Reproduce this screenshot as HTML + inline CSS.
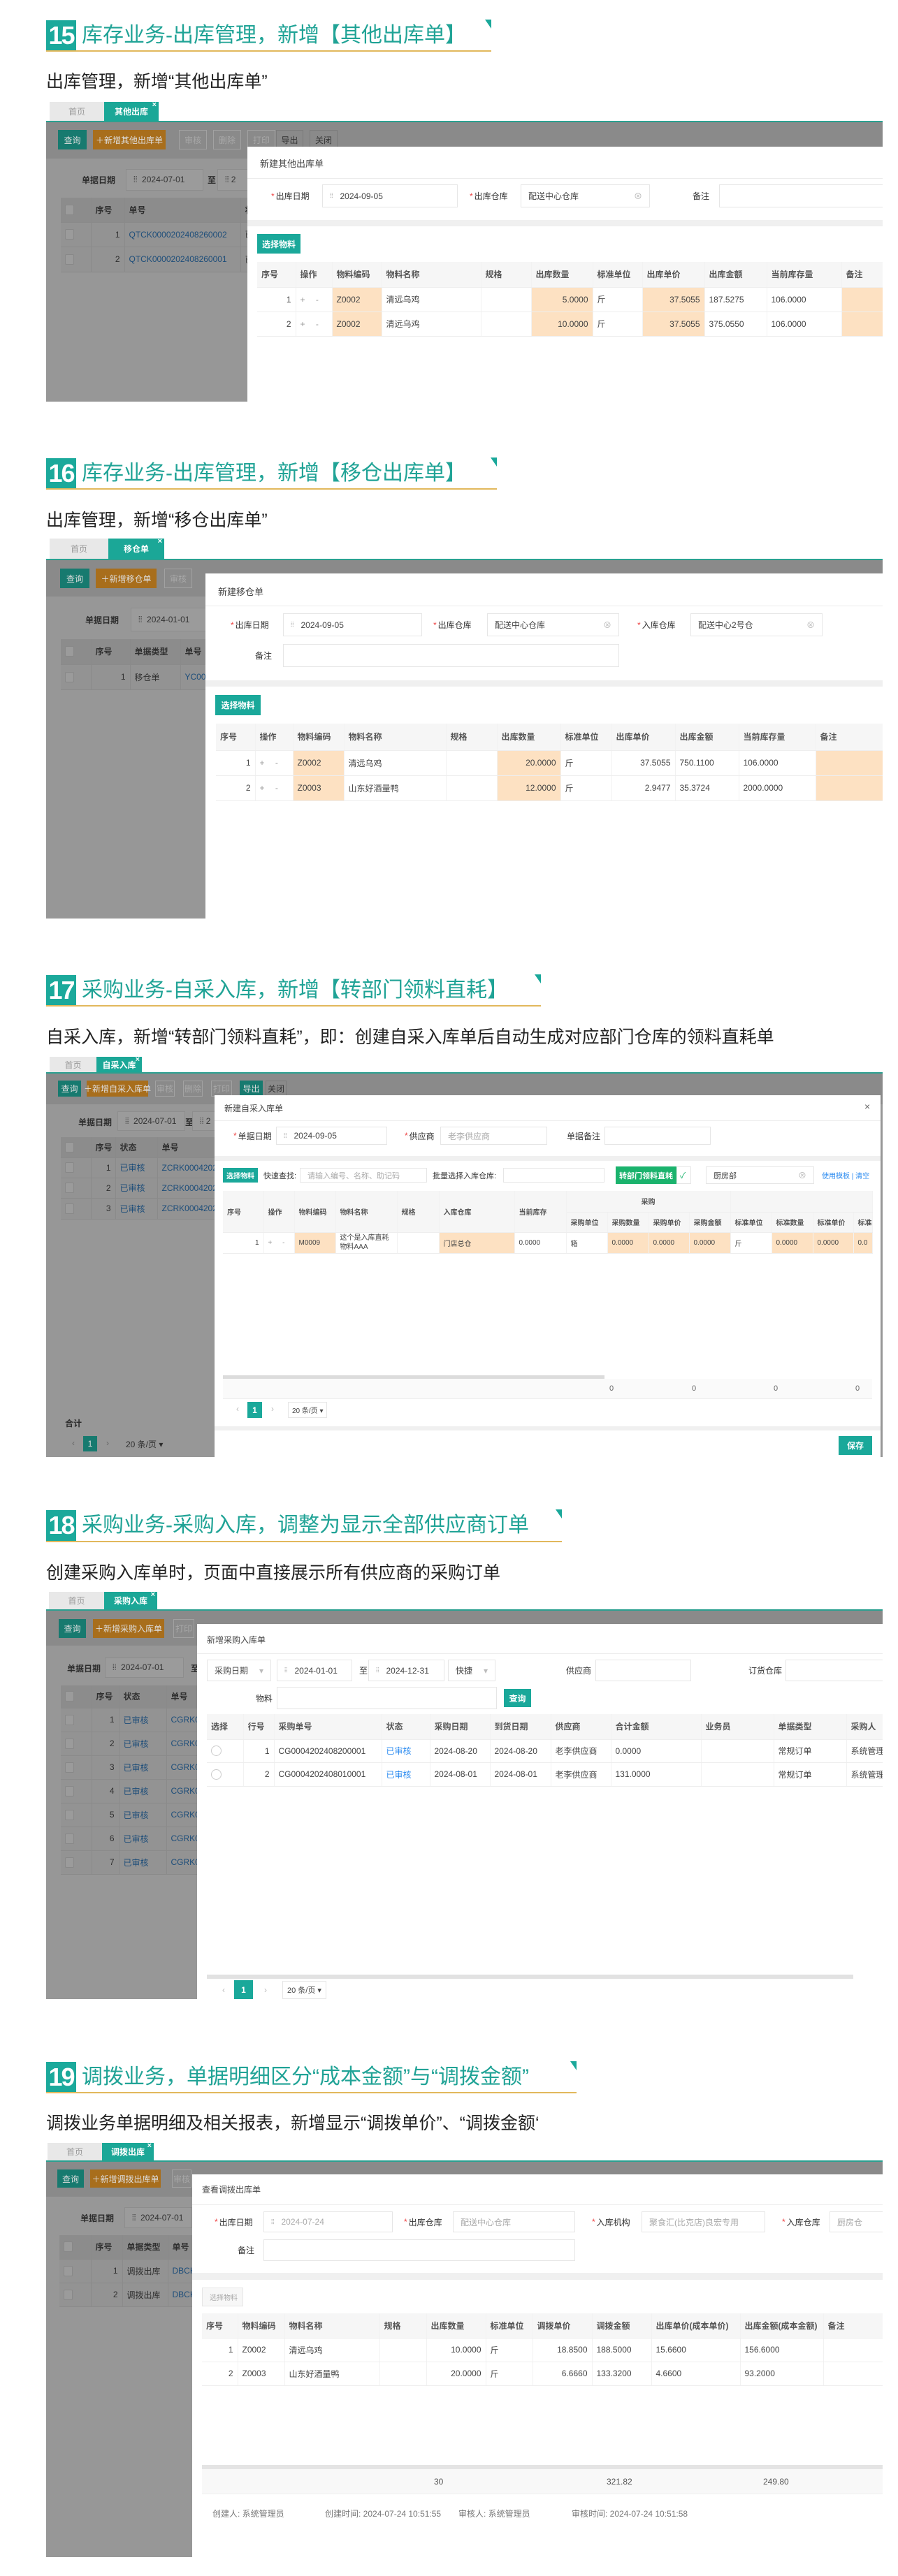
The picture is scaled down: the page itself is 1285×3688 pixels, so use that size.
<!DOCTYPE html>
<html><head><meta charset="utf-8">
<style>
*{margin:0;padding:0;box-sizing:border-box}
body{width:1285px;height:3688px;background:#fff;position:relative;overflow:hidden;font-family:"Liberation Sans","Noto Sans CJK SC",sans-serif;color:#333}
.a{position:absolute}
.hb{position:absolute;left:66px;width:43px;height:44px;background:#1ba99b;color:#fff;font:bold 36px/44px "Liberation Sans",sans-serif;text-align:center;letter-spacing:-2px}
.ht{position:absolute;left:117px;font-size:30px;line-height:44px;color:#20a396;white-space:nowrap;font-family:"Liberation Sans","Noto Sans CJK SC",sans-serif}
.hu{position:absolute;left:66px;height:2px;background:#e2b85c}
.tri{position:absolute;width:0;height:0;border-top:13px solid #1aa89a;border-left:9px solid transparent}
.sub{position:absolute;left:66px;font-size:25px;line-height:30px;color:#222;white-space:nowrap}
.shot{position:absolute;left:66px;width:1197px;background:#979797;overflow:hidden}
.tabbar{position:absolute;left:0;top:0;width:100%;background:#fff}
.tab{position:absolute;top:0;bottom:0;background:#e8e8e8;color:#9a9a9a;font-size:12px;display:flex;align-items:center;justify-content:center}
.tab.on{background:#1ba797;color:#fff;font-weight:bold}
.tab.on:after{content:"×";position:absolute;right:3px;top:-2px;font-size:11px}
.tl{position:absolute;left:0;width:100%;height:2px;background:#2aa090}
.band{position:absolute;left:0;width:100%;background:#8a8a8a}
.b{position:absolute;font-size:12px;display:flex;align-items:center;justify-content:center;color:#ddd;white-space:nowrap}
.bt{background:#177a6f}
.bo{background:#a86e1c}
.bd{border:1px solid #a2a2a2;color:#a8a8a8}
.bk{border:1px solid #7a7a7a;color:#333}
.g{position:absolute;font-size:12px;color:#2d2d2d;white-space:nowrap}
.gi{position:absolute;background:#9b9b9b;border:1px solid #8d8d8d;font-size:12px;color:#333;display:flex;align-items:center;padding-left:10px;white-space:nowrap}
.lt{position:absolute;border-collapse:collapse;table-layout:fixed;font-size:12px;color:#2f2f2f;background:#939393}
.lt td{border-bottom:1px solid #8a8a8a;border-right:1px solid #8a8a8a;padding:0 6px;white-space:nowrap;overflow:hidden}
.lt tr.h td{background:#8c8c8c;font-weight:bold}
.lk{color:#1e4e7a}
.cb{display:inline-block;width:13px;height:15px;border:1px solid #888;background:#9b9b9b;border-radius:2px;vertical-align:middle}
.m{position:absolute;background:#fff;overflow:hidden}
.mt{position:absolute;font-size:13px;color:#444;white-space:nowrap}
.dv{position:absolute;left:0;width:100%;height:1px;background:#ececec}
.gb{position:absolute;left:0;width:100%;background:#f0f0f0}
.lb{position:absolute;font-size:12px;color:#333;white-space:nowrap;display:flex;align-items:center}
.lb i{color:#e44;font-style:normal;margin-right:2px}
.in{position:absolute;background:#fff;border:1px solid #e6e6e6;font-size:12px;color:#444;display:flex;align-items:center;padding-left:10px;white-space:nowrap}
.in.ph{color:#aaa}
.cal{color:#aaa;margin-right:10px;font-size:10px}
.x{position:absolute;right:10px;color:#bbb;font-size:12px}
.bn{position:absolute;background:#1aa89a;color:#fff;font-size:12px;display:flex;align-items:center;justify-content:center;font-weight:bold;white-space:nowrap}
.t{position:absolute;border-collapse:collapse;table-layout:fixed;font-size:12px;color:#444}
.t td,.t th{border-bottom:1px solid #eee;border-right:1px solid #f2f2f2;padding:0 6px;white-space:nowrap;overflow:hidden;text-align:left}
.t th{background:#f6f6f6;color:#555;font-weight:bold}
.t .o{background:#fde1c2}
.r{text-align:right!important}
.pm{color:#999;letter-spacing:6px}
.blue{color:#2d8cf0}
</style></head><body>

<!-- ============ 15 ============ -->
<div class="hb" style="top:29px">15</div>
<div class="ht" style="top:29px">库存业务-出库管理，新增【其他出库单】</div>
<div class="hu" style="top:72px;width:637px"></div>
<div class="tri" style="left:694px;top:28px"></div>
<div class="sub" style="top:102px">出库管理，新增“其他出库单”</div>

<div class="shot" style="top:146px;height:429px">
  <div class="tabbar" style="height:27px">
    <div class="tab" style="left:5px;width:78px">首页</div>
    <div class="tab on" style="left:83px;width:78px">其他出库</div>
  </div>
  <div class="tl" style="top:27px"></div>
  <div class="band" style="top:29px;height:52px"></div>
  <div class="b bt" style="left:17px;top:40px;width:41px;height:28px">查询</div>
  <div class="b bo" style="left:67px;top:40px;width:104px;height:28px">＋新增其他出库单</div>
  <div class="b bd" style="left:190px;top:40px;width:40px;height:28px">审核</div>
  <div class="b bd" style="left:239px;top:40px;width:40px;height:28px">删除</div>
  <div class="b bd" style="left:288px;top:40px;width:40px;height:28px">打印</div>
  <div class="b bk" style="left:329px;top:40px;width:39px;height:28px">导出</div>
  <div class="b bk" style="left:377px;top:40px;width:40px;height:28px">关闭</div>
  <div class="g" style="left:51px;top:103px;font-weight:bold">单据日期</div>
  <div class="gi" style="left:114px;top:96px;width:111px;height:31px">⦙⦙ &nbsp;2024-07-01</div>
  <div class="g" style="left:231px;top:103px;font-weight:bold">至</div>
  <div class="gi" style="left:245px;top:96px;width:60px;height:31px">⦙⦙ 2</div>
  <table class="lt" style="left:21px;top:137px;width:267px">
    <colgroup><col style="width:43px"><col style="width:48px"><col style="width:166px"><col style="width:10px"></colgroup>
    <tr class="h" style="height:35px"><td><span class="cb"></span></td><td>序号</td><td>单号</td><td>状</td></tr>
    <tr style="height:35px"><td><span class="cb"></span></td><td class="r">1</td><td class="lk">QTCK0000202408260002</td><td>已</td></tr>
    <tr style="height:36px"><td><span class="cb"></span></td><td class="r">2</td><td class="lk">QTCK0000202408260001</td><td>已</td></tr>
  </table>
  <div class="m" style="left:288px;top:64px;width:909px;height:365px">
    <div class="mt" style="left:18px;top:14px">新建其他出库单</div>
    <div class="dv" style="top:45px"></div>
    <div class="lb" style="left:34px;top:54px;height:33px"><i>*</i>出库日期</div>
    <div class="in" style="left:107px;top:54px;width:194px;height:33px"><span class="cal">⦙⦙</span>2024-09-05</div>
    <div class="lb" style="left:318px;top:54px;height:33px"><i>*</i>出库仓库</div>
    <div class="in" style="left:391px;top:54px;width:185px;height:33px">配送中心仓库<span class="x">⊗</span></div>
    <div class="lb" style="left:637px;top:54px;height:33px">备注</div>
    <div class="in" style="left:675px;top:54px;width:240px;height:33px"></div>
    <div class="gb" style="top:105px;height:9px"></div>
    <div class="bn" style="left:14px;top:125px;width:62px;height:28px">选择物料</div>
    <table class="t" style="left:14px;top:165px;width:895px">
      <colgroup><col style="width:55px"><col style="width:52px"><col style="width:71px"><col style="width:142px"><col style="width:72px"><col style="width:88px"><col style="width:71px"><col style="width:89px"><col style="width:89px"><col style="width:107px"><col style="width:59px"></colgroup>
      <tr style="height:36px"><th>序号</th><th>操作</th><th>物料编码</th><th>物料名称</th><th>规格</th><th>出库数量</th><th>标准单位</th><th>出库单价</th><th>出库金额</th><th>当前库存量</th><th>备注</th></tr>
      <tr style="height:35px"><td class="r">1</td><td class="pm">+ -</td><td class="o">Z0002</td><td>清远乌鸡</td><td></td><td class="o r">5.0000</td><td>斤</td><td class="o r">37.5055</td><td>187.5275</td><td>106.0000</td><td class="o"></td></tr>
      <tr style="height:35px"><td class="r">2</td><td class="pm">+ -</td><td class="o">Z0002</td><td>清远乌鸡</td><td></td><td class="o r">10.0000</td><td>斤</td><td class="o r">37.5055</td><td>375.0550</td><td>106.0000</td><td class="o"></td></tr>
    </table>
  </div>
</div>

<!-- ============ 16 ============ -->
<div class="hb" style="top:656px">16</div>
<div class="ht" style="top:656px">库存业务-出库管理，新增【移仓出库单】</div>
<div class="hu" style="top:699px;width:645px"></div>
<div class="tri" style="left:702px;top:655px"></div>
<div class="sub" style="top:730px">出库管理，新增“移仓出库单”</div>

<div class="shot" style="top:771px;height:544px">
  <div class="tabbar" style="height:29px">
    <div class="tab" style="left:5px;width:84px">首页</div>
    <div class="tab on" style="left:89px;width:80px">移仓单</div>
  </div>
  <div class="tl" style="top:29px"></div>
  <div class="band" style="top:31px;height:52px"></div>
  <div class="b bt" style="left:20px;top:43px;width:42px;height:28px">查询</div>
  <div class="b bo" style="left:71px;top:43px;width:87px;height:28px">＋新增移仓单</div>
  <div class="b bd" style="left:169px;top:43px;width:40px;height:28px">审核</div>
  <div class="g" style="left:56px;top:108px;font-weight:bold">单据日期</div>
  <div class="gi" style="left:121px;top:99px;width:120px;height:34px">⦙⦙ &nbsp;2024-01-01</div>
  <table class="lt" style="left:21px;top:144px;width:207px">
    <colgroup><col style="width:43px"><col style="width:56px"><col style="width:72px"><col style="width:36px"></colgroup>
    <tr class="h" style="height:36px"><td><span class="cb"></span></td><td>序号</td><td>单据类型</td><td>单号</td></tr>
    <tr style="height:36px"><td><span class="cb"></span></td><td class="r">1</td><td>移仓单</td><td class="lk">YC00</td></tr>
  </table>
  <div class="m" style="left:228px;top:50px;width:969px;height:494px">
    <div class="mt" style="left:18px;top:16px">新建移仓单</div>
    <div class="dv" style="top:46px"></div>
    <div class="lb" style="left:36px;top:57px;height:33px"><i>*</i>出库日期</div>
    <div class="in" style="left:111px;top:57px;width:199px;height:33px"><span class="cal">⦙⦙</span>2024-09-05</div>
    <div class="lb" style="left:326px;top:57px;height:33px"><i>*</i>出库仓库</div>
    <div class="in" style="left:403px;top:57px;width:189px;height:33px">配送中心仓库<span class="x">⊗</span></div>
    <div class="lb" style="left:618px;top:57px;height:33px"><i>*</i>入库仓库</div>
    <div class="in" style="left:694px;top:57px;width:189px;height:33px">配送中心2号仓<span class="x">⊗</span></div>
    <div class="lb" style="left:71px;top:101px;height:33px">备注</div>
    <div class="in" style="left:111px;top:101px;width:481px;height:33px"></div>
    <div class="gb" style="top:153px;height:9px"></div>
    <div class="bn" style="left:14px;top:174px;width:65px;height:29px">选择物料</div>
    <table class="t" style="left:15px;top:215px;width:954px">
      <colgroup><col style="width:56px"><col style="width:54px"><col style="width:73px"><col style="width:146px"><col style="width:73px"><col style="width:91px"><col style="width:73px"><col style="width:91px"><col style="width:91px"><col style="width:110px"><col style="width:96px"></colgroup>
      <tr style="height:38px"><th>序号</th><th>操作</th><th>物料编码</th><th>物料名称</th><th>规格</th><th>出库数量</th><th>标准单位</th><th>出库单价</th><th>出库金额</th><th>当前库存量</th><th>备注</th></tr>
      <tr style="height:36px"><td class="r">1</td><td class="pm">+ -</td><td class="o">Z0002</td><td>清远乌鸡</td><td></td><td class="o r">20.0000</td><td>斤</td><td class="r">37.5055</td><td>750.1100</td><td>106.0000</td><td class="o"></td></tr>
      <tr style="height:36px"><td class="r">2</td><td class="pm">+ -</td><td class="o">Z0003</td><td>山东好酒量鸭</td><td></td><td class="o r">12.0000</td><td>斤</td><td class="r">2.9477</td><td>35.3724</td><td>2000.0000</td><td class="o"></td></tr>
    </table>
  </div>
</div>

<!-- ============ 17 ============ -->
<div class="hb" style="top:1396px">17</div>
<div class="ht" style="top:1396px">采购业务-自采入库，新增【转部门领料直耗】</div>
<div class="hu" style="top:1439px;width:708px"></div>
<div class="tri" style="left:765px;top:1395px"></div>
<div class="sub" style="top:1470px">自采入库，新增“转部门领料直耗”，即：创建自采入库单后自动生成对应部门仓库的领料直耗单</div>

<div class="shot" style="top:1513px;height:573px">
  <div class="tabbar" style="height:22px">
    <div class="tab" style="left:5px;width:67px">首页</div>
    <div class="tab on" style="left:72px;width:65px">自采入库</div>
  </div>
  <div class="tl" style="top:22px"></div>
  <div class="band" style="top:24px;height:44px"></div>
  <div class="b bt" style="left:17px;top:34px;width:33px;height:23px">查询</div>
  <div class="b bo" style="left:58px;top:34px;width:88px;height:23px">＋新增自采入库单</div>
  <div class="b bd" style="left:156px;top:34px;width:28px;height:23px">审核</div>
  <div class="b bd" style="left:196px;top:34px;width:28px;height:23px">删除</div>
  <div class="b bd" style="left:236px;top:34px;width:30px;height:23px">打印</div>
  <div class="b bt" style="left:277px;top:34px;width:33px;height:23px">导出</div>
  <div class="b bk" style="left:314px;top:34px;width:30px;height:23px">关闭</div>
  <div class="g" style="left:46px;top:85px;font-weight:bold">单据日期</div>
  <div class="gi" style="left:102px;top:78px;width:97px;height:28px">⦙⦙ &nbsp;2024-07-01</div>
  <div class="g" style="left:199px;top:85px;font-weight:bold">至</div>
  <div class="gi" style="left:209px;top:78px;width:40px;height:28px">⦙⦙ 2</div>
  <table class="lt" style="left:21px;top:115px;width:220px">
    <colgroup><col style="width:43px"><col style="width:35px"><col style="width:60px"><col style="width:82px"></colgroup>
    <tr class="h" style="height:29px"><td><span class="cb"></span></td><td>序号</td><td>状态</td><td>单号</td></tr>
    <tr style="height:29px"><td><span class="cb"></span></td><td class="r">1</td><td class="lk">已审核</td><td class="lk">ZCRK00042024</td></tr>
    <tr style="height:29px"><td><span class="cb"></span></td><td class="r">2</td><td class="lk">已审核</td><td class="lk">ZCRK00042024</td></tr>
    <tr style="height:30px"><td><span class="cb"></span></td><td class="r">3</td><td class="lk">已审核</td><td class="lk">ZCRK00042024</td></tr>
  </table>
  <div class="g" style="left:27px;top:516px;font-weight:bold">合计</div>
  <div class="g" style="left:37px;top:546px;color:#666">‹</div>
  <div class="b bt" style="left:53px;top:543px;width:20px;height:22px">1</div>
  <div class="g" style="left:86px;top:546px;color:#666">›</div>
  <div class="g" style="left:114px;top:546px">20 条/页 ▾</div>
  <div class="m" style="left:241px;top:55px;width:953px;height:518px">
    <div class="mt" style="left:14px;top:10px;font-size:12px">新建自采入库单</div>
    <div class="mt" style="left:930px;top:8px;font-size:14px;color:#666">×</div>
    <div class="dv" style="top:36px"></div>
    <div class="lb" style="left:27px;top:45px;height:26px"><i>*</i>单据日期</div>
    <div class="in" style="left:88px;top:45px;width:159px;height:26px"><span class="cal">⦙⦙</span>2024-09-05</div>
    <div class="lb" style="left:272px;top:45px;height:26px"><i>*</i>供应商</div>
    <div class="in ph" style="left:323px;top:45px;width:153px;height:26px">老李供应商</div>
    <div class="lb" style="left:504px;top:45px;height:26px">单据备注</div>
    <div class="in" style="left:558px;top:45px;width:152px;height:26px"></div>
    <div class="gb" style="top:87px;height:7px"></div>
    <div class="bn" style="left:12px;top:104px;width:50px;height:21px;font-size:10px">选择物料</div>
    <div class="lb" style="left:70px;top:104px;height:21px;font-size:11px">快速查找:</div>
    <div class="in ph" style="left:122px;top:104px;width:182px;height:21px;font-size:11px">请输入编号、名称、助记码</div>
    <div class="lb" style="left:312px;top:104px;height:21px;font-size:11px">批量选择入库仓库:</div>
    <div class="in" style="left:413px;top:104px;width:145px;height:21px"></div>
    <div class="bn" style="left:574px;top:102px;width:87px;height:25px;background:#1bb36d;font-size:11px">转部门领料直耗</div>
    <div class="in" style="left:661px;top:102px;width:21px;height:25px;padding-left:4px;color:#1bb36d">✓</div>
    <div class="in" style="left:703px;top:102px;width:155px;height:25px;font-size:11px">厨房部<span class="x">⊗</span></div>
    <div class="lb blue" style="left:869px;top:104px;height:21px;font-size:10px">使用模板 | 清空</div>
    <table class="t" style="left:12px;top:137px;width:929px;font-size:10px">
      <colgroup><col style="width:58px"><col style="width:44px"><col style="width:59px"><col style="width:88px"><col style="width:60px"><col style="width:108px"><col style="width:74px"><col style="width:59px"><col style="width:59px"><col style="width:58px"><col style="width:59px"><col style="width:59px"><col style="width:59px"><col style="width:58px"><col style="width:27px"></colgroup>
      <tr style="height:30px"><th rowspan="2">序号</th><th rowspan="2">操作</th><th rowspan="2">物料编码</th><th rowspan="2">物料名称</th><th rowspan="2">规格</th><th rowspan="2">入库仓库</th><th rowspan="2">当前库存</th><th colspan="4" style="text-align:center">采购</th><th colspan="4"></th></tr>
      <tr style="height:29px"><th>采购单位</th><th>采购数量</th><th>采购单价</th><th>采购金额</th><th>标准单位</th><th>标准数量</th><th>标准单价</th><th>标准</th></tr>
      <tr style="height:30px"><td class="r">1</td><td class="pm">+ -</td><td class="o">M0009</td><td style="white-space:normal;line-height:13px">这个是入库直耗物料AAA</td><td></td><td class="o">门店总仓</td><td>0.0000</td><td>箱</td><td class="o">0.0000</td><td class="o">0.0000</td><td class="o">0.0000</td><td>斤</td><td class="o">0.0000</td><td class="o">0.0000</td><td class="o">0.0</td></tr>
    </table>
    <div class="a" style="left:12px;top:401px;width:546px;height:5px;background:#dcdcdc"></div>
    <div class="a" style="left:12px;top:406px;width:929px;height:29px;background:#fafafa;border-bottom:1px solid #eee"></div>
    <div class="g" style="left:565px;top:414px;color:#666;font-size:11px">0</div>
    <div class="g" style="left:683px;top:414px;color:#666;font-size:11px">0</div>
    <div class="g" style="left:800px;top:414px;color:#666;font-size:11px">0</div>
    <div class="g" style="left:917px;top:414px;color:#666;font-size:11px">0</div>
    <div class="g" style="left:31px;top:442px;color:#bbb">‹</div>
    <div class="bn" style="left:47px;top:439px;width:21px;height:23px">1</div>
    <div class="g" style="left:81px;top:442px;color:#bbb">›</div>
    <div class="in" style="left:105px;top:439px;width:56px;height:23px;font-size:10px;padding-left:5px">20 条/页 ▾</div>
    <div class="gb" style="top:474px;height:6px"></div>
    <div class="bn" style="left:893px;top:488px;width:48px;height:27px">保存</div>
  </div>
</div>

<!-- ============ 18 ============ -->
<div class="hb" style="top:2162px">18</div>
<div class="ht" style="top:2162px">采购业务-采购入库，调整为显示全部供应商订单</div>
<div class="hu" style="top:2206px;width:738px"></div>
<div class="tri" style="left:795px;top:2161px"></div>
<div class="sub" style="top:2237px">创建采购入库单时，页面中直接展示所有供应商的采购订单</div>

<div class="shot" style="top:2279px;height:583px">
  <div class="tabbar" style="height:25px">
    <div class="tab" style="left:4px;width:79px">首页</div>
    <div class="tab on" style="left:83px;width:76px">采购入库</div>
  </div>
  <div class="tl" style="top:25px"></div>
  <div class="band" style="top:27px;height:50px"></div>
  <div class="b bt" style="left:18px;top:39px;width:39px;height:27px">查询</div>
  <div class="b bo" style="left:67px;top:39px;width:102px;height:27px">＋新增采购入库单</div>
  <div class="b bd" style="left:182px;top:39px;width:30px;height:27px">打印</div>
  <div class="g" style="left:30px;top:101px;font-weight:bold">单据日期</div>
  <div class="gi" style="left:84px;top:94px;width:113px;height:29px">⦙⦙ &nbsp;2024-07-01</div>
  <div class="g" style="left:207px;top:101px;font-weight:bold">至</div>
  <table class="lt" style="left:21px;top:134px;width:195px">
    <colgroup><col style="width:44px"><col style="width:39px"><col style="width:68px"><col style="width:44px"></colgroup>
    <tr class="h" style="height:32px"><td><span class="cb"></span></td><td>序号</td><td>状态</td><td>单号</td></tr>
    <tr style="height:34px"><td><span class="cb"></span></td><td class="r">1</td><td class="lk">已审核</td><td class="lk">CGRK0</td></tr>
    <tr style="height:34px"><td><span class="cb"></span></td><td class="r">2</td><td class="lk">已审核</td><td class="lk">CGRK0</td></tr>
    <tr style="height:34px"><td><span class="cb"></span></td><td class="r">3</td><td class="lk">已审核</td><td class="lk">CGRK0</td></tr>
    <tr style="height:34px"><td><span class="cb"></span></td><td class="r">4</td><td class="lk">已审核</td><td class="lk">CGRK0</td></tr>
    <tr style="height:34px"><td><span class="cb"></span></td><td class="r">5</td><td class="lk">已审核</td><td class="lk">CGRK0</td></tr>
    <tr style="height:34px"><td><span class="cb"></span></td><td class="r">6</td><td class="lk">已审核</td><td class="lk">CGRK0</td></tr>
    <tr style="height:34px"><td><span class="cb"></span></td><td class="r">7</td><td class="lk">已审核</td><td class="lk">CGRK0</td></tr>
  </table>
  <div class="m" style="left:216px;top:46px;width:981px;height:537px">
    <div class="mt" style="left:14px;top:14px;font-size:12px">新增采购入库单</div>
    <div class="dv" style="top:42px"></div>
    <div class="in" style="left:14px;top:51px;width:92px;height:31px">采购日期<span class="x">▾</span></div>
    <div class="in" style="left:114px;top:51px;width:108px;height:31px"><span class="cal">⦙⦙</span>2024-01-01</div>
    <div class="lb" style="left:232px;top:51px;height:31px">至</div>
    <div class="in" style="left:245px;top:51px;width:109px;height:31px"><span class="cal">⦙⦙</span>2024-12-31</div>
    <div class="in" style="left:359px;top:51px;width:68px;height:31px">快捷<span class="x">▾</span></div>
    <div class="lb" style="left:528px;top:51px;height:31px">供应商</div>
    <div class="in" style="left:570px;top:51px;width:137px;height:31px"></div>
    <div class="lb" style="left:789px;top:51px;height:31px">订货仓库</div>
    <div class="in" style="left:842px;top:51px;width:150px;height:31px"></div>
    <div class="lb" style="left:84px;top:90px;height:32px">物料</div>
    <div class="in" style="left:114px;top:90px;width:315px;height:32px"></div>
    <div class="bn" style="left:439px;top:93px;width:39px;height:26px">查询</div>
    <table class="t" style="left:14px;top:129px;width:967px">
      <colgroup><col style="width:52px"><col style="width:44px"><col style="width:154px"><col style="width:69px"><col style="width:86px"><col style="width:87px"><col style="width:86px"><col style="width:129px"><col style="width:104px"><col style="width:104px"><col style="width:52px"></colgroup>
      <tr style="height:36px"><th>选择</th><th>行号</th><th>采购单号</th><th>状态</th><th>采购日期</th><th>到货日期</th><th>供应商</th><th>合计金额</th><th>业务员</th><th>单据类型</th><th>采购人</th></tr>
      <tr style="height:33px"><td><span style="display:inline-block;width:15px;height:15px;border:1px solid #ccc;border-radius:50%;vertical-align:middle"></span></td><td class="r">1</td><td>CG0004202408200001</td><td class="blue">已审核</td><td>2024-08-20</td><td>2024-08-20</td><td>老李供应商</td><td>0.0000</td><td></td><td>常规订单</td><td>系统管理</td></tr>
      <tr style="height:34px"><td><span style="display:inline-block;width:15px;height:15px;border:1px solid #ccc;border-radius:50%;vertical-align:middle"></span></td><td class="r">2</td><td>CG0004202408010001</td><td class="blue">已审核</td><td>2024-08-01</td><td>2024-08-01</td><td>老李供应商</td><td>131.0000</td><td></td><td>常规订单</td><td>系统管理</td></tr>
    </table>
    <div class="a" style="left:14px;top:502px;width:925px;height:6px;background:#e2e2e2"></div>
    <div class="g" style="left:36px;top:517px;color:#bbb">‹</div>
    <div class="bn" style="left:53px;top:510px;width:27px;height:28px">1</div>
    <div class="g" style="left:96px;top:517px;color:#bbb">›</div>
    <div class="in" style="left:122px;top:511px;width:63px;height:26px;font-size:11px;padding-left:6px">20 条/页 ▾</div>
  </div>
</div>

<!-- ============ 19 ============ -->
<div class="hb" style="top:2952px">19</div>
<div class="ht" style="top:2952px">调拨业务，单据明细区分“成本金额”与“调拨金额”</div>
<div class="hu" style="top:2995px;width:759px"></div>
<div class="tri" style="left:816px;top:2951px"></div>
<div class="sub" style="top:3025px">调拨业务单据明细及相关报表，新增显示“调拨单价”、“调拨金额‘</div>

<div class="shot" style="top:3068px;height:593px">
  <div class="tabbar" style="height:25px">
    <div class="tab" style="left:2px;width:78px">首页</div>
    <div class="tab on" style="left:80px;width:74px">调拨出库</div>
  </div>
  <div class="tl" style="top:25px"></div>
  <div class="band" style="top:27px;height:50px"></div>
  <div class="b bt" style="left:16px;top:38px;width:38px;height:26px">查询</div>
  <div class="b bo" style="left:63px;top:38px;width:101px;height:26px">＋新增调拨出库单</div>
  <div class="b bd" style="left:180px;top:38px;width:28px;height:26px">审核</div>
  <div class="g" style="left:49px;top:99px;font-weight:bold">单据日期</div>
  <div class="gi" style="left:112px;top:92px;width:97px;height:30px">⦙⦙ &nbsp;2024-07-01</div>
  <table class="lt" style="left:19px;top:132px;width:190px">
    <colgroup><col style="width:45px"><col style="width:45px"><col style="width:65px"><col style="width:35px"></colgroup>
    <tr class="h" style="height:34px"><td><span class="cb"></span></td><td>序号</td><td>单据类型</td><td>单号</td></tr>
    <tr style="height:34px"><td><span class="cb"></span></td><td class="r">1</td><td>调拨出库</td><td class="lk">DBCK</td></tr>
    <tr style="height:34px"><td><span class="cb"></span></td><td class="r">2</td><td>调拨出库</td><td class="lk">DBCK</td></tr>
  </table>
  <div class="m" style="left:209px;top:45px;width:988px;height:548px">
    <div class="mt" style="left:14px;top:13px;font-size:12px">查看调拨出库单</div>
    <div class="dv" style="top:43px"></div>
    <div class="lb" style="left:32px;top:53px;height:30px"><i>*</i>出库日期</div>
    <div class="in ph" style="left:102px;top:53px;width:185px;height:30px"><span class="cal">⦙⦙</span>2024-07-24</div>
    <div class="lb" style="left:303px;top:53px;height:30px"><i>*</i>出库仓库</div>
    <div class="in ph" style="left:373px;top:53px;width:175px;height:30px">配送中心仓库</div>
    <div class="lb" style="left:572px;top:53px;height:30px"><i>*</i>入库机构</div>
    <div class="in ph" style="left:643px;top:53px;width:177px;height:30px">聚食汇(比克店)良宏专用</div>
    <div class="lb" style="left:844px;top:53px;height:30px"><i>*</i>入库仓库</div>
    <div class="in ph" style="left:912px;top:53px;width:80px;height:30px">厨房仓</div>
    <div class="lb" style="left:65px;top:93px;height:31px">备注</div>
    <div class="in" style="left:102px;top:93px;width:446px;height:31px"></div>
    <div class="gb" style="top:141px;height:10px"></div>
    <div class="in ph" style="left:14px;top:162px;width:59px;height:27px;font-size:10px;background:#f7f7f7">选择物料</div>
    <table class="t" style="left:14px;top:199px;width:974px">
      <colgroup><col style="width:51px"><col style="width:67px"><col style="width:136px"><col style="width:67px"><col style="width:85px"><col style="width:67px"><col style="width:85px"><col style="width:85px"><col style="width:127px"><col style="width:119px"><col style="width:85px"></colgroup>
      <tr style="height:35px"><th>序号</th><th>物料编码</th><th>物料名称</th><th>规格</th><th>出库数量</th><th>标准单位</th><th>调拨单价</th><th>调拨金额</th><th>出库单价(成本单价)</th><th>出库金额(成本金额)</th><th>备注</th></tr>
      <tr style="height:34px"><td class="r">1</td><td>Z0002</td><td>清远乌鸡</td><td></td><td class="r">10.0000</td><td>斤</td><td class="r">18.8500</td><td>188.5000</td><td>15.6600</td><td>156.6000</td><td></td></tr>
      <tr style="height:34px"><td class="r">2</td><td>Z0003</td><td>山东好酒量鸭</td><td></td><td class="r">20.0000</td><td>斤</td><td class="r">6.6660</td><td>133.3200</td><td>4.6600</td><td>93.2000</td><td></td></tr>
    </table>
    <div class="a" style="left:14px;top:416px;width:974px;height:6px;background:#e4e4e4"></div>
    <div class="a" style="left:14px;top:422px;width:974px;height:36px;background:#f8f8f8;border-bottom:1px solid #eee"></div>
    <div class="g" style="left:346px;top:433px;color:#555">30</div>
    <div class="g" style="left:593px;top:433px;color:#555">321.82</div>
    <div class="g" style="left:817px;top:433px;color:#555">249.80</div>
    <div class="g" style="left:29px;top:477px;color:#777">创建人: 系统管理员</div>
    <div class="g" style="left:190px;top:477px;color:#777">创建时间: 2024-07-24 10:51:55</div>
    <div class="g" style="left:381px;top:477px;color:#777">审核人: 系统管理员</div>
    <div class="g" style="left:543px;top:477px;color:#777">审核时间: 2024-07-24 10:51:58</div>
  </div>
</div>

</body></html>
